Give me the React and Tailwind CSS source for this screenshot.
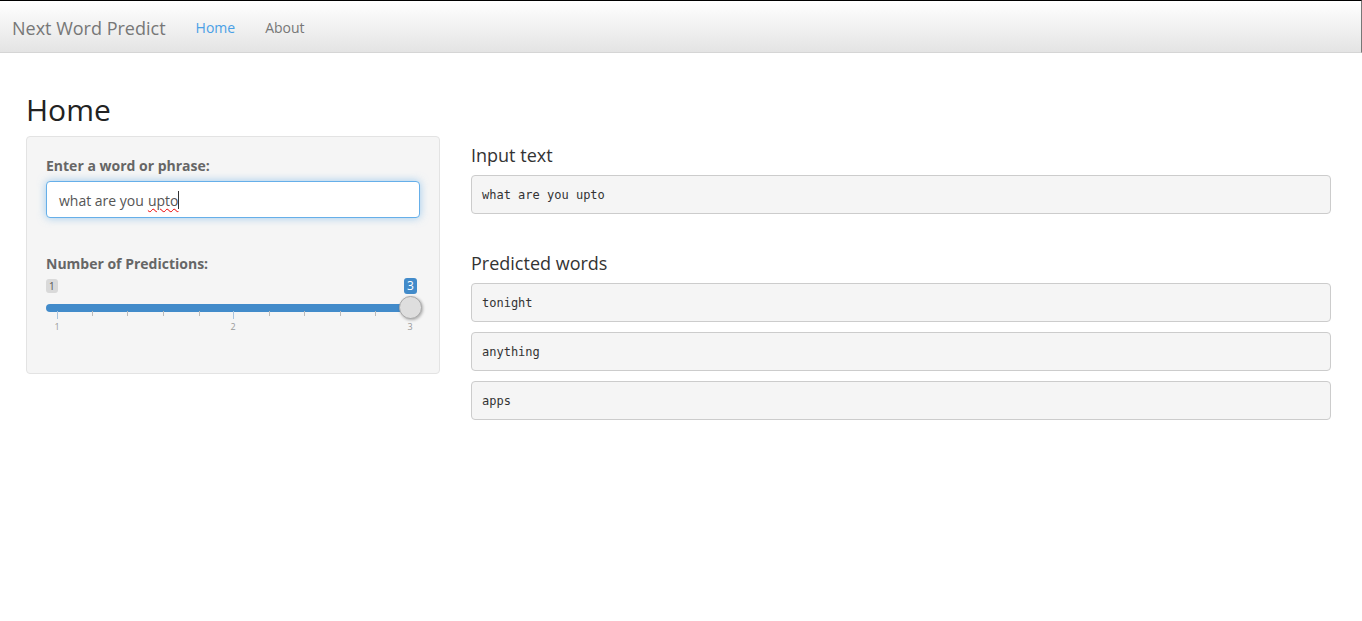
import React from 'react';

const predictions = ['tonight', 'anything', 'apps'];

const ticks = [57, 92, 127, 163, 199, 233, 269, 304, 340, 375, 410];

const Navbar = () => (
  <div className="h-[53px] border-t border-t-black border-b border-b-[#d5d5d5] border-r border-r-[#777] bg-gradient-to-b from-white to-[#e4e4e4] flex items-center pt-[2px]">
    <span className="ml-[12px] text-[18px] text-[#777] leading-none">Next Word Predict</span>
    <span className="ml-[30px] text-[14px] text-[#4aa0e6]">Home</span>
    <span className="ml-[30px] text-[14px] text-[#777]">About</span>
  </div>
);

const Slider = () => (
  <div className="relative h-[60px] -mt-[4px]">
    {/* min / max labels */}
    <span className="absolute left-0 top-[9px] h-[14px] px-[3px] rounded-[3px] bg-[#d9d9d9] text-[#555] text-[10px] leading-[14px]">1</span>
    <span className="absolute left-[358px] top-[8px] h-[16px] px-[3px] rounded-[3px] bg-[#428bca] text-white text-[12px] leading-[16px]">3</span>
    {/* bar */}
    <div className="absolute left-0 top-[34px] w-[364px] h-[8px] rounded-full bg-[#428bca]" />
    {/* ticks */}
    {ticks.map((x, i) => (
      <div
        key={x}
        className={i % 5 === 0 ? 'absolute top-[41px] w-px h-[8px] bg-[#a8c4de]' : 'absolute top-[41px] w-px h-[5px] bg-[#bbb]'}
        style={{ left: x - 46 }}
      />
    ))}
    {[['1', 57], ['2', 233], ['3', 410]].map(([t, x]) => (
      <span key={t} className="absolute top-[52px] text-[9px] leading-none text-[#999] -translate-x-1/2" style={{ left: x - 46 }}>{t}</span>
    ))}
    {/* handle */}
    <div className="absolute left-[353px] top-[26px] w-[23px] h-[23px] rounded-full bg-[#dedede] border border-[#aaa] shadow-[1px_1px_3px_rgba(0,0,0,0.3)]" />
  </div>
);

const OutBox = ({ children }) => (
  <div className="h-[39px] bg-[#f5f5f5] border border-[#ccc] rounded-[4px] px-[10px] flex items-center text-[12px] text-[#333] font-['DejaVu_Sans_Mono',monospace]">
    {children}
  </div>
);

export default function App() {
  return (
    <div className="min-h-[621px] bg-white font-['Open_Sans',sans-serif]">
      <Navbar />
      <div className="px-[26px] pr-[31px]">
        <h2 className="text-[30px] leading-[33px] text-[#222] mt-[40px] mb-[10px]">Home</h2>
        <div className="flex gap-[31px]">
          <div className="w-[414px] shrink-0 h-[238px] bg-[#f5f5f5] border border-[#e3e3e3] rounded-[4px] px-[19px] pt-[19px]">
            <label className="block text-[14px] font-bold text-[#666] leading-[20px] mb-[5px]">Enter a word or phrase:</label>
            <div className="h-[37px] bg-white border border-[#66afe9] rounded-[4px] shadow-[0_0_8px_rgba(102,175,233,0.6)] px-[12px] pt-[1px] flex items-center text-[14px] text-[#555]">
              <span>what are you </span>
              <span className="ml-[4px] underline decoration-wavy decoration-[#e00] underline-offset-[2px] decoration-[1px]">upto</span>
              <span className="w-px h-[18px] bg-[#333]" />
            </div>
            <label className="block mt-[36px] text-[14px] font-bold text-[#666] leading-[20px]">Number of Predictions:</label>
            <Slider />
          </div>
          <div className="flex-1 pt-[9px]">
            <h4 className="text-[18px] leading-[20px] text-[#333] mb-[10px]">Input text</h4>
            <OutBox>what are you upto</OutBox>
            <h4 className="text-[18px] leading-[20px] text-[#333] mt-[39px] mb-[10px]">Predicted words</h4>
            <div className="flex flex-col gap-[10px]">
              {predictions.map((p) => (
                <OutBox key={p}>{p}</OutBox>
              ))}
            </div>
          </div>
        </div>
      </div>
    </div>
  );
}
